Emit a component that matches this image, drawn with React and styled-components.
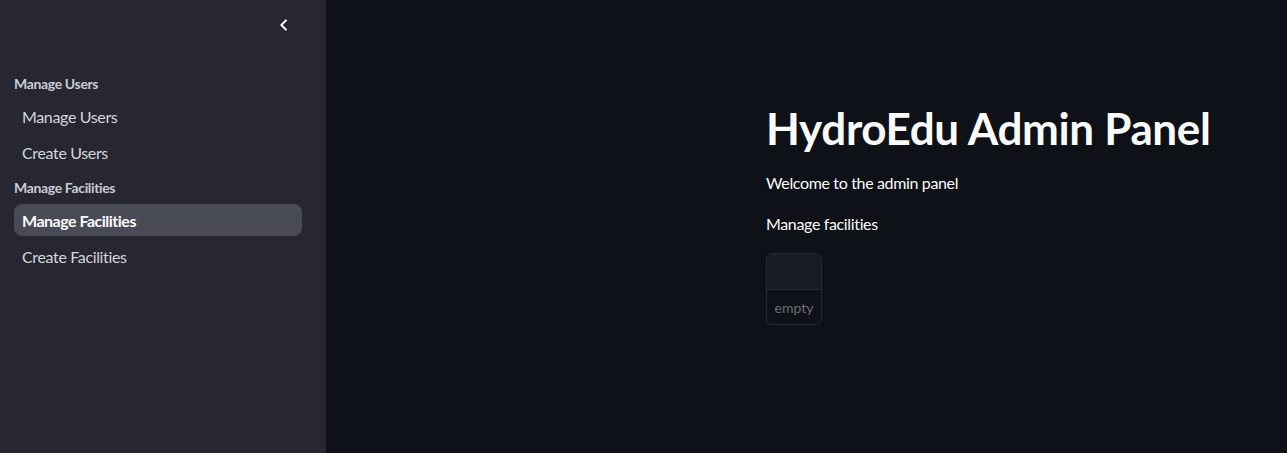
import * as React from "react";
import styled, { createGlobalStyle } from "styled-components";

const colors = {
  main: "#0e1117",
  sidebar: "#262730",
  text: "#fafafa",
  navText: "#d4d6dc",
  header: "#c9ccd4",
  active: "#484a56",
  border: "#262a33",
  muted: "#6b6e76",
};

const GlobalStyle = createGlobalStyle`
  html, body {
    margin: 0;
    padding: 0;
    background: ${colors.main};
  }
  body {
    font-family: "Lato", "Noto Sans", sans-serif;
    color: ${colors.text};
  }
`;

const Shell = styled.div`
  display: flex;
  height: 100vh;
  overflow: hidden;
`;

const Sidebar = styled.aside`
  width: 326px;
  flex-shrink: 0;
  background: ${colors.sidebar};
  display: flex;
  flex-direction: column;
`;

const SidebarTop = styled.div`
  display: flex;
  justify-content: flex-end;
  padding: 13px 30px 0 0;
  height: 74px;
  box-sizing: border-box;
`;

const CollapseButton = styled.button`
  width: 24px;
  height: 24px;
  display: flex;
  align-items: center;
  justify-content: center;
  background: none;
  border: none;
  padding: 0;
  color: ${colors.text};
  cursor: pointer;
`;

const Nav = styled.nav`
  display: flex;
  flex-direction: column;
  gap: 4px;
  padding: 0 24px 0 14px;
`;

const SectionHeader = styled.div`
  font-size: 14px;
  font-weight: 700;
  line-height: 20px;
  letter-spacing: -0.35px;
  color: ${colors.header};
  margin: ${(p) => (p.$first ? "0 0 2px" : "6px 0 2px")};
`;

const NavItem = styled.a`
  display: flex;
  align-items: center;
  height: 32px;
  padding: 0 8px;
  border-radius: 8px;
  font-size: 16px;
  letter-spacing: ${(p) => (p.$active ? "-0.5px" : "-0.35px")};
  font-weight: ${(p) => (p.$active ? 700 : 400)};
  color: ${(p) => (p.$active ? colors.text : colors.navText)};
  background: ${(p) => (p.$active ? colors.active : "transparent")};
  text-decoration: none;
  cursor: pointer;
`;

const Main = styled.main`
  flex: 1;
  padding: 101px 0 0 440px;
`;

const Title = styled.h1`
  margin: 0;
  font-size: 44px;
  font-weight: 700;
  line-height: 54px;
  letter-spacing: -0.35px;
`;

const Paragraph = styled.p`
  margin: ${(p) => p.$margin || "0"};
  font-size: 16px;
  line-height: 24px;
  letter-spacing: -0.35px;
`;

const EmptyTable = styled.div`
  width: 56px;
  height: 72px;
  margin-top: 17px;
  box-sizing: border-box;
  border: 1px solid ${colors.border};
  border-radius: 6px;
  overflow: hidden;
  display: flex;
  flex-direction: column;
`;

const TableHead = styled.div`
  height: 35px;
  background: #1a1c23;
  border-bottom: 1px solid ${colors.border};
`;

const TableBody = styled.div`
  flex: 1;
  display: flex;
  align-items: center;
  justify-content: center;
  font-size: 14px;
  color: ${colors.muted};
`;

const sections = [
  { title: "Manage Users", items: ["Manage Users", "Create Users"] },
  { title: "Manage Facilities", items: ["Manage Facilities", "Create Facilities"] },
];

export default function App() {
  return (
    <>
      <GlobalStyle />
      <Shell>
        <Sidebar>
          <SidebarTop>
            <CollapseButton aria-label="Collapse sidebar">
              <svg width="16" height="16" viewBox="0 0 24 24" fill="none" stroke="currentColor" strokeWidth="3" strokeLinecap="round" strokeLinejoin="round">
                <path d="M15 5l-7 7 7 7" />
              </svg>
            </CollapseButton>
          </SidebarTop>
          <Nav>
            {sections.map((section, i) => (
              <React.Fragment key={section.title}>
                <SectionHeader $first={i === 0}>{section.title}</SectionHeader>
                {section.items.map((item) => (
                  <NavItem key={item} $active={item === "Manage Facilities"}>
                    {item}
                  </NavItem>
                ))}
              </React.Fragment>
            ))}
          </Nav>
        </Sidebar>
        <Main>
          <Title>HydroEdu Admin Panel</Title>
          <Paragraph $margin="16px 0 0">Welcome to the admin panel</Paragraph>
          <Paragraph $margin="17px 0 0">Manage facilities</Paragraph>
          <EmptyTable>
            <TableHead />
            <TableBody>empty</TableBody>
          </EmptyTable>
        </Main>
      </Shell>
    </>
  );
}
